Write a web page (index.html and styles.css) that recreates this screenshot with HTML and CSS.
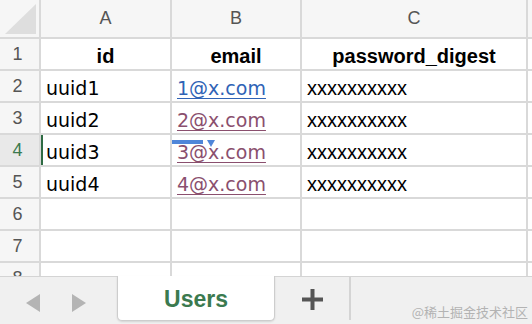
FILE: index.html
```html
<!DOCTYPE html>
<html lang="en">
<head>
    <meta charset="UTF-8">
    <meta name="viewport" content="width=device-width, initial-scale=1.0">
    <title>Users</title>
    <link rel="stylesheet" href="styles.css">
</head>
<body>
    <div class="sheet">
        <div class="grid">
            <div class="corner"><span class="corner-tri"></span></div>
            <div class="colhead">A</div>
            <div class="colhead">B</div>
            <div class="colhead">C</div>
            <div class="colhead"></div>

            <div class="rowhead">1</div>
            <div class="cell head">id</div>
            <div class="cell head">email</div>
            <div class="cell head">password_digest</div>
            <div class="cell"></div>

            <div class="rowhead">2</div>
            <div class="cell">uuid1</div>
            <div class="cell"><a class="link" href="#">1@x.com</a></div>
            <div class="cell mask">xxxxxxxxxx</div>
            <div class="cell"></div>

            <div class="rowhead">3</div>
            <div class="cell">uuid2</div>
            <div class="cell"><a class="link visited" href="#">2@x.com</a></div>
            <div class="cell mask">xxxxxxxxxx</div>
            <div class="cell"></div>

            <div class="rowhead current">4</div>
            <div class="cell selected">uuid3</div>
            <div class="cell drag">
                <a class="link visited" href="#">3@x.com</a>
                <span class="drag-bar"></span>
                <span class="drag-tip"></span>
            </div>
            <div class="cell mask">xxxxxxxxxx</div>
            <div class="cell"></div>

            <div class="rowhead">5</div>
            <div class="cell">uuid4</div>
            <div class="cell"><a class="link visited" href="#">4@x.com</a></div>
            <div class="cell mask">xxxxxxxxxx</div>
            <div class="cell"></div>

            <div class="rowhead">6</div>
            <div class="cell"></div><div class="cell"></div><div class="cell"></div><div class="cell"></div>

            <div class="rowhead">7</div>
            <div class="cell"></div><div class="cell"></div><div class="cell"></div><div class="cell"></div>

            <div class="rowhead">8</div>
            <div class="cell"></div><div class="cell"></div><div class="cell"></div><div class="cell"></div>
        </div>

        <div class="tabbar">
            <div class="nav">
                <svg width="14" height="18" viewBox="0 0 14 18"><path d="M14 0 L0 9 L14 18 Z" fill="#b4b4b4"/></svg>
                <svg width="14" height="18" viewBox="0 0 14 18"><path d="M0 0 L14 9 L0 18 Z" fill="#b4b4b4"/></svg>
            </div>
            <div class="tab">Users</div>
            <div class="add">
                <svg width="21" height="21" viewBox="0 0 21 21"><path d="M8.5 0h4v8.5h8.5v4h-8.5v8.5h-4v-8.5h-8.5v-4h8.5z" fill="#555"/></svg>
            </div>
            <div class="rest"></div>
        </div>

        <span class="watermark">@稀土掘金技术社区</span>
    </div>
</body>
</html>
```

FILE: styles.css
```css
* {
    box-sizing: border-box;
    margin: 0;
    padding: 0;
}
body {
    font-family: 'DejaVu Sans', sans-serif;
    background: #fff;
    width: 532px;
    height: 324px;
    overflow: hidden;
}
.sheet {
    position: relative;
    display: flex;
    flex-direction: column;
    height: 324px;
}
.grid {
    flex: 1;
    overflow: hidden;
    display: grid;
    grid-template-columns: 39px 129px 128px 224px 1fr;
    grid-template-rows: 37px;
    grid-auto-rows: 30px;
    gap: 2px;
    background: #d9d9d9;
}
.corner {
    background: #f6f6f6;
    position: relative;
}
.corner-tri {
    position: absolute;
    left: 5px;
    top: 4px;
    width: 31px;
    height: 30px;
    background: #dedede;
    clip-path: polygon(100% 0, 100% 100%, 0 100%);
}
.colhead {
    background: #f6f6f6;
    color: #555;
    font-family: 'Liberation Sans', sans-serif;
    font-size: 18px;
    display: flex;
    align-items: flex-end;
    justify-content: center;
    padding-bottom: 8px;
}
.rowhead {
    background: #f6f6f6;
    color: #555;
    font-family: 'Liberation Sans', sans-serif;
    font-size: 18px;
    display: flex;
    align-items: flex-end;
    justify-content: center;
    padding-bottom: 4px;
    padding-right: 4px;
}
.rowhead.current {
    background: #e9e9e9;
    color: #3b7a4f;
}
.cell {
    background: #fff;
    color: #000;
    font-size: 19px;
    line-height: 22px;
    display: flex;
    align-items: flex-end;
    padding: 0 5px 2px;
    white-space: nowrap;
    overflow: hidden;
}
.cell.head {
    justify-content: center;
    font-family: 'Liberation Sans', sans-serif;
    font-weight: 700;
    font-size: 20px;
}
.cell.mask {
    font-family: 'Liberation Sans', sans-serif;
    font-size: 20px;
}
.cell.selected {
    box-shadow: inset 2px 0 0 #2e6b43;
}
.link {
    color: #2f63b6;
    text-decoration: underline;
    text-underline-offset: 3px;
}
.link.visited {
    color: #8a4f6e;
}
.drag {
    position: relative;
    overflow: visible;
}
.drag-bar {
    position: absolute;
    left: 0;
    top: 5px;
    width: 31px;
    height: 4px;
    background: #4f86d9;
}
.drag-tip {
    position: absolute;
    left: 35px;
    top: 5px;
    width: 8px;
    height: 7px;
    background: #4f86d9;
    clip-path: polygon(0 0, 100% 0, 50% 100%);
}
.tabbar {
    height: 48px;
    display: flex;
    background: #f0f0f0;
}
.nav {
    width: 117px;
    border-top: 1px solid #d4d4d4;
    display: flex;
    align-items: center;
    gap: 32px;
    padding: 4px 0 0 26px;
}
.tab {
    width: 158px;
    height: 45px;
    background: #fff;
    border: 1px solid #cdcdcd;
    border-top: none;
    border-radius: 0 0 5px 5px;
    box-shadow: 0 1px 2px rgba(0, 0, 0, 0.12);
    color: #3b7a4f;
    font-family: 'Liberation Sans', sans-serif;
    font-weight: 700;
    font-size: 23px;
    display: flex;
    align-items: center;
    justify-content: center;
    padding-top: 2px;
}
.add {
    width: 76px;
    border-top: 1px solid #d4d4d4;
    border-right: 2px solid #d4d4d4;
    margin-bottom: 4px;
    display: flex;
    align-items: center;
    justify-content: center;
    padding-top: 2px;
}
.rest {
    flex: 1;
    border-top: 1px solid #d4d4d4;
}
.watermark {
    position: absolute;
    right: 4px;
    bottom: 3px;
    font-family: 'Noto Sans CJK SC', sans-serif;
    font-size: 13px;
    color: #b3b3b3;
}
```
